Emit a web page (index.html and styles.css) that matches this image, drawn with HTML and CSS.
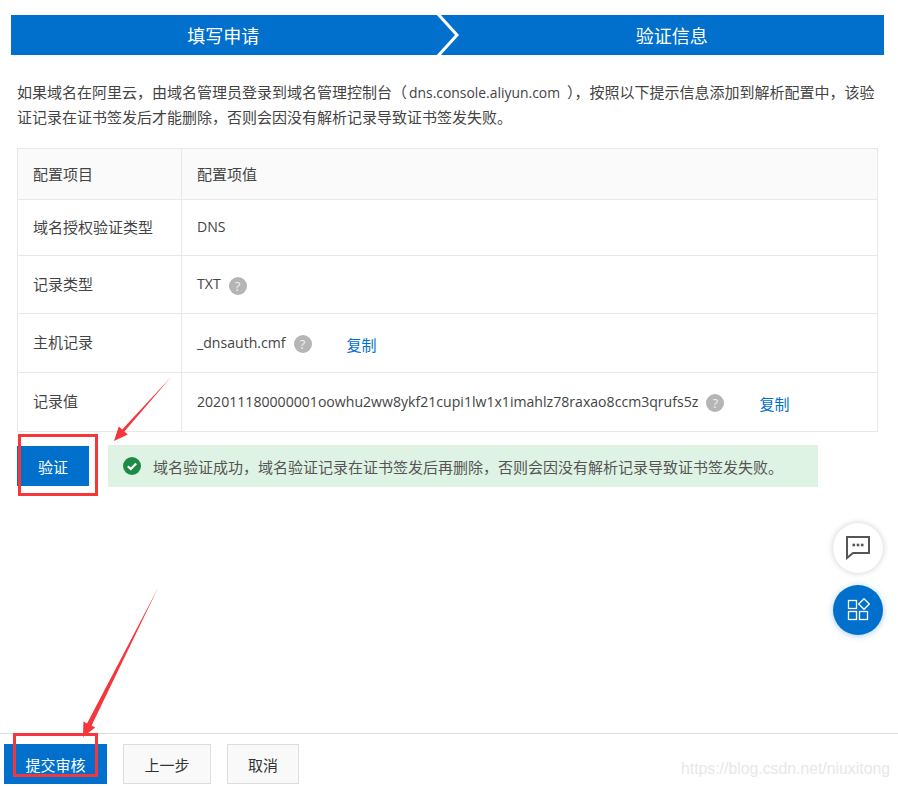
FILE: index.html
```html
<!DOCTYPE html>
<html lang="zh-CN">
<head>
    <meta charset="UTF-8">
    <meta name="viewport" content="width=device-width, initial-scale=1.0">
    <title>验证信息</title>
    <link rel="stylesheet" href="styles.css">
</head>
<body>
    <div class="page">
        <div class="steps">
            <div class="step">填写申请</div>
            <svg class="step-arrow" width="24" height="40" viewBox="0 0 24 40">
                <path d="M1 -2 L21 20 L1 42" fill="none" stroke="#fff" stroke-width="3"/>
            </svg>
            <div class="step">验证信息</div>
        </div>

        <div class="content">
            <p class="intro">如果域名在阿里云，由域名管理员登录到域名管理控制台（<span class="latin">dns.console.aliyun.com</span>），按照以下提示信息添加到解析配置中，该验<br>证记录在证书签发后才能删除，否则会因没有解析记录导致证书签发失败。</p>

            <table class="config">
                <tr class="row-head">
                    <th>配置项目</th>
                    <th>配置项值</th>
                </tr>
                <tr class="row-type">
                    <td>域名授权验证类型</td>
                    <td><div class="value">DNS</div></td>
                </tr>
                <tr class="row-record">
                    <td>记录类型</td>
                    <td><div class="value">TXT<span class="help">?</span></div></td>
                </tr>
                <tr class="row-host">
                    <td>主机记录</td>
                    <td><div class="value">_dnsauth.cmf<span class="help">?</span><a class="copy">复制</a></div></td>
                </tr>
                <tr class="row-val">
                    <td>记录值</td>
                    <td><div class="value">202011180000001oowhu2ww8ykf21cupi1lw1x1imahlz78raxao8ccm3qrufs5z<span class="help">?</span><a class="copy">复制</a></div></td>
                </tr>
            </table>

            <div class="verify">
                <button class="btn-verify">验证</button>
                <div class="alert">
                    <svg class="alert-icon" width="18" height="18" viewBox="0 0 18 18">
                        <circle cx="9" cy="9" r="9" fill="#1f8a45"/>
                        <path d="M4.8 9.2 L7.8 12 L13.2 6.4" fill="none" stroke="#fff" stroke-width="2.2"/>
                    </svg>
                    域名验证成功，域名验证记录在证书签发后再删除，否则会因没有解析记录导致证书签发失败。
                </div>
            </div>
        </div>

        <div class="footer">
            <button class="btn btn-primary">提交审核</button>
            <button class="btn btn-prev">上一步</button>
            <button class="btn btn-cancel">取消</button>
        </div>

        <div class="fabs">
            <div class="fab">
                <svg width="24" height="24" viewBox="0 0 24 24">
                    <path d="M1 1 H23 V17 H7 L1 22 Z" fill="none" stroke="#555" stroke-width="2"/>
                    <rect x="6.5" y="7.7" width="2.6" height="2.6" fill="#555"/>
                    <rect x="10.7" y="7.7" width="2.6" height="2.6" fill="#555"/>
                    <rect x="14.9" y="7.7" width="2.6" height="2.6" fill="#555"/>
                </svg>
            </div>
            <div class="fab fab-blue">
                <svg width="24" height="24" viewBox="0 0 24 24">
                    <g fill="none" stroke="#fff" stroke-width="1.3">
                        <rect x="2.5" y="2.5" width="8" height="8"/>
                        <rect x="2.5" y="13.5" width="8" height="8"/>
                        <rect x="13.5" y="13.5" width="8" height="8"/>
                        <path d="M18 0.7 L23.3 6 L18 11.3 L12.7 6 Z"/>
                    </g>
                </svg>
            </div>
        </div>

        <svg class="marks" width="898" height="787" viewBox="0 0 898 787">
            <g fill="none" stroke="#f5363b" stroke-width="3">
                <rect x="19.5" y="435.5" width="77" height="59"/>
                <rect x="14.5" y="734.5" width="82" height="41"/>
            </g>
            <g fill="#f5363b">
                <polygon points="171,377 124.4,431.5 127.8,434.5 114,441 118.8,426.5 122.2,429.5"/>
                <polygon points="158,588 91.6,725.6 95.2,727.4 83,737 83.4,721.6 87,723.4"/>
            </g>
        </svg>

        <div class="watermark">https://blog.csdn.net/niuxitong</div>
    </div>
</body>
</html>
```

FILE: styles.css
```css
* {
    box-sizing: border-box;
}
body {
    margin: 0;
    font-family: "Open Sans", "Noto Sans CJK SC", sans-serif;
    font-size: 15px;
    color: #444;
    background: #fff;
}
.page {
    position: relative;
    display: flex;
    flex-direction: column;
    height: 787px;
    padding-top: 15px;
    overflow: hidden;
}
.steps {
    display: flex;
    height: 40px;
    margin: 0 14px 0 11px;
    background: #0070cc;
    flex-shrink: 0;
}
.step {
    flex: 1;
    color: #fff;
    font-size: 18px;
    line-height: 42px;
    text-align: center;
}
.step-arrow {
    display: block;
    flex-shrink: 0;
}
.content {
    margin: 0 20px 0 17px;
}
.intro {
    margin: 25px 0 18px;
    line-height: 25px;
    white-space: nowrap;
}
.latin {
    padding: 0 7px 0 2px;
    font-size: 13.9px;
    line-height: 1;
}
.config {
    width: 861px;
    border-collapse: collapse;
    table-layout: fixed;
    border: 1px solid #e8e8e8;
}
.config th,
.config td {
    padding: 0 15px 2px;
    border: 1px solid #e8e8e8;
    font-weight: normal;
    text-align: left;
}
.config td:first-child {
    padding-bottom: 3px;
}
.config th:first-child,
.config td:first-child {
    width: 164px;
}
.config th {
    background: #fafafa;
}
.row-head {
    height: 51px;
}
.row-type {
    height: 56px;
}
.row-record {
    height: 58px;
}
.row-host,
.row-val {
    height: 59px;
}
.value {
    display: flex;
    align-items: center;
    color: #444;
    font-size: 14.1px;
}
.help {
    width: 18px;
    height: 18px;
    margin: 4px 0 0 8px;
    border-radius: 50%;
    background: #b5b5b5;
    color: #f0f0f0;
    font-size: 13px;
    line-height: 18px;
    text-align: center;
}
.copy {
    margin: 5px 0 0 35px;
    color: #0070cc;
    font-size: 15px;
}
.verify {
    display: flex;
    align-items: center;
    gap: 19px;
    margin-top: 13px;
}
.btn-verify {
    width: 72px;
    height: 40px;
    border: none;
    background: #0070cc;
    color: #fff;
    font-family: inherit;
    font-size: 15px;
}
.alert {
    display: flex;
    align-items: center;
    gap: 12px;
    width: 710px;
    height: 42px;
    padding-left: 15px;
    background: #dff3e4;
    color: #555;
}
.alert-icon {
    flex-shrink: 0;
}
.footer {
    display: flex;
    gap: 16px;
    margin-top: auto;
    height: 54px;
    padding: 10px 4px 3px;
    border-top: 1px solid #ddd;
}
.btn {
    height: 40px;
    border: 1px solid #ddd;
    background: #f9f9f9;
    color: #333;
    font-family: inherit;
    font-size: 15px;
}
.btn-primary {
    width: 103px;
    border: none;
    background: #0070cc;
    color: #fff;
}
.btn-prev {
    width: 88px;
}
.btn-cancel {
    width: 72px;
}
.fabs {
    position: absolute;
    top: 523px;
    left: 833px;
    display: flex;
    flex-direction: column;
    gap: 12px;
}
.fab {
    display: flex;
    align-items: center;
    justify-content: center;
    width: 50px;
    height: 50px;
    border-radius: 50%;
    background: #fff;
    box-shadow: 0 0 6px rgba(0, 0, 0, 0.2);
}
.fab-blue {
    background: #0070cc;
    box-shadow: 0 1px 6px rgba(0, 112, 204, 0.35);
}
.marks {
    position: absolute;
    top: 0;
    left: 0;
    pointer-events: none;
}
.watermark {
    position: absolute;
    right: 8px;
    bottom: 9px;
    font-family: "Liberation Sans", sans-serif;
    font-size: 15.8px;
    color: #e8e8e8;
}
```
